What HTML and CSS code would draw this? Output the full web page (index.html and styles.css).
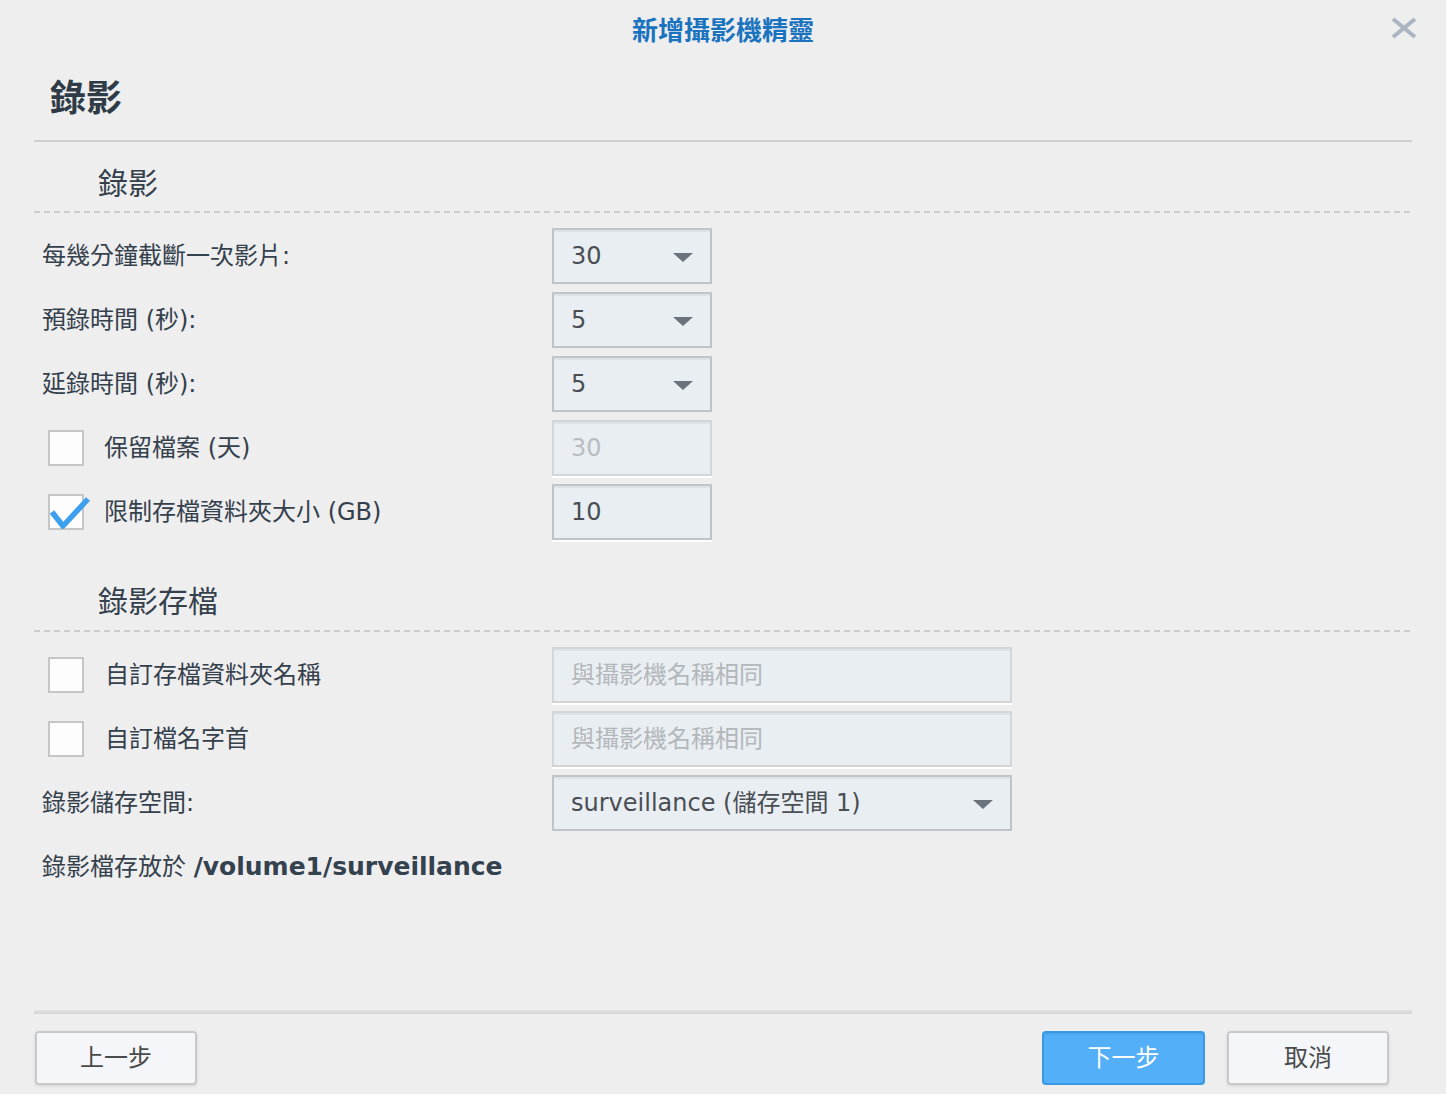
FILE: index.html
```html
<!DOCTYPE html>
<html lang="zh-Hant">
<head>
<meta charset="utf-8">
<title>新增攝影機精靈</title>
<link rel="stylesheet" href="styles.css">
</head>
<body>
<div class="dialog">
  <header class="dlg-header">
    <div></div>
    <div class="dlg-title">新增攝影機精靈</div>
    <div class="dlg-close">
      <svg width="26" height="22" viewBox="0 0 26 22"><path d="M2 2 L24 20 M24 2 L2 20" stroke="#a9b6c1" stroke-width="4" stroke-linecap="butt" fill="none"/></svg>
    </div>
  </header>

  <main class="dlg-body">
    <h1 class="page-head">錄影</h1>

    <div class="section-title">錄影</div>
    <div class="dash"></div>
    <div class="rows">
      <div class="row">
        <div class="label">每幾分鐘截斷一次影片:</div>
        <div class="field select"><span>30</span><i class="caret"></i></div>
      </div>
      <div class="row">
        <div class="label">預錄時間 (秒):</div>
        <div class="field select"><span>5</span><i class="caret"></i></div>
      </div>
      <div class="row">
        <div class="label">延錄時間 (秒):</div>
        <div class="field select"><span>5</span><i class="caret"></i></div>
      </div>
      <div class="row">
        <div class="label check-label"><span class="cb"></span><span>保留檔案 (天)</span></div>
        <div class="field text disabled"><span>30</span></div>
      </div>
      <div class="row">
        <div class="label check-label"><span class="cb checked"><svg class="tick" width="44" height="38" viewBox="0 0 44 38"><path d="M2 18 L13 32 L38 5" stroke="#3d9ff0" stroke-width="5.5" fill="none" stroke-linejoin="round"/></svg></span><span>限制存檔資料夾大小 (GB)</span></div>
        <div class="field text"><span>10</span></div>
      </div>
    </div>

    <div class="section-title second">錄影存檔</div>
    <div class="dash"></div>
    <div class="rows">
      <div class="row">
        <div class="label check-label"><span class="cb"></span><span class="lbl-wide">自訂存檔資料夾名稱</span></div>
        <div class="field text wide disabled placeholder"><span>與攝影機名稱相同</span></div>
      </div>
      <div class="row">
        <div class="label check-label"><span class="cb"></span><span class="lbl-wide">自訂檔名字首</span></div>
        <div class="field text wide disabled placeholder"><span>與攝影機名稱相同</span></div>
      </div>
      <div class="row">
        <div class="label">錄影儲存空間:</div>
        <div class="field select wide"><span>surveillance (儲存空間 1)</span><i class="caret"></i></div>
      </div>
    </div>

    <div class="path-line">錄影檔存放於 <b>/volume1/surveillance</b></div>
  </main>

  <footer class="dlg-footer">
    <div class="footer-rule"></div>
    <div class="buttons">
      <button class="btn">上一步</button>
      <div class="spacer"></div>
      <button class="btn primary">下一步</button>
      <button class="btn">取消</button>
    </div>
  </footer>
</div>
</body>
</html>
```

FILE: styles.css
```css
* { box-sizing: border-box; }

html, body {
  margin: 0;
  padding: 0;
  background: #eeeeee;
}

body {
  font-family: "DejaVu Sans", "Noto Sans CJK TC", sans-serif;
  color: #34404c;
}

.dialog {
  width: 1446px;
  height: 1094px;
  display: flex;
  flex-direction: column;
  background: #eeeeee;
}

.dlg-header {
  height: 60px;
  display: grid;
  grid-template-columns: 1fr auto 1fr;
  align-items: center;
}

.dlg-title {
  font-family: "Noto Sans CJK TC", sans-serif;
  font-size: 26px;
  font-weight: bold;
  color: #1a73bf;
  line-height: 30px;
  padding-bottom: 2px;
}

.dlg-close {
  justify-self: end;
  margin-right: 29px;
  margin-top: -4px;
  display: flex;
}

.dlg-body {
  padding: 0 34px;
}

.page-head {
  margin: 15px 0 0 0;
  padding: 0 0 25px 16px;
  font-family: "Noto Sans CJK TC", sans-serif;
  font-size: 36px;
  font-weight: bold;
  line-height: 40px;
  color: #2f3c48;
  border-bottom: 2px solid #cfcfcf;
}

.section-title {
  padding: 21px 0 12px 64px;
  font-family: "Noto Sans CJK TC", sans-serif;
  font-size: 30px;
  line-height: 36px;
  color: #34404c;
}

.section-title.second {
  padding-top: 41px;
  padding-bottom: 13px;
}

.dash {
  height: 2px;
  background: repeating-linear-gradient(to right, #cdcdcd 0 6px, transparent 6px 10px);
}

.rows {
  margin-top: 15px;
  display: flex;
  flex-direction: column;
  gap: 8px;
}

.row {
  height: 56px;
  display: flex;
  align-items: center;
}

.label {
  width: 518px;
  padding-left: 8px;
  font-size: 24px;
  line-height: 30px;
  color: #34404c;
}

.check-label {
  padding-left: 14px;
  display: flex;
  align-items: center;
  gap: 20px;
}

.lbl-wide { margin-left: 1px; }

.cb {
  position: relative;
  width: 36px;
  height: 36px;
  border: 2px solid #c6c6c6;
  background: #fdfdfd;
  flex: none;
}

.tick {
  position: absolute;
  left: 0px;
  top: -2px;
}

.field {
  height: 56px;
  width: 160px;
  border: 2px solid #c1c4c7;
  background: #e9eef2;
  box-shadow: inset 0 2px 0 #dde2e8;
  display: flex;
  align-items: center;
  padding: 0 17px 0 17px;
  font-size: 24px;
  color: #4a4e54;
}

.field.text {
  box-shadow: inset 0 2px 0 #dde2e8, 0 2px 0 #ffffff;
}

.field.wide { width: 460px; }

.field.disabled {
  border-color: #d3d5d7;
  color: #b9bdc1;
}

.field.placeholder {
  color: #b3b7bb;
}

.field span { flex: 1; line-height: 30px; white-space: nowrap; }

.caret {
  width: 0;
  height: 0;
  border-left: 10px solid transparent;
  border-right: 10px solid transparent;
  border-top: 9px solid #6a737c;
  margin-top: 2px;
}

.path-line {
  margin-top: 21px;
  padding-left: 8px;
  font-size: 24px;
  line-height: 30px;
  color: #34404c;
}

.path-line b {
  font-weight: bold;
  font-size: 25px;
  color: #34414e;
}

.dlg-footer {
  margin-top: auto;
  padding: 0 34px;
}

.footer-rule {
  height: 4px;
  background: linear-gradient(#e3e3e3, #d3d3d3);
}

.buttons {
  display: flex;
  align-items: center;
  gap: 22px;
  padding: 17px 23px 9px 1px;
}

.spacer { flex: 1; }

.btn {
  width: 162px;
  height: 54px;
  border: 2px solid #c9c9c9;
  border-radius: 4px;
  background: #f4f6f9;
  box-shadow: 0 1px 3px rgba(0,0,0,0.12);
  font-family: "Noto Sans CJK TC", sans-serif;
  font-size: 24px;
  line-height: 30px;
  color: #4a4a4a;
  padding: 0 0 4px 0;
}

.btn.primary {
  width: 163px;
  background: #53aff7;
  border-color: #3a99e3;
  box-shadow: inset 0 2px 0 #4aa6ee;
  color: #ffffff;
}
```
